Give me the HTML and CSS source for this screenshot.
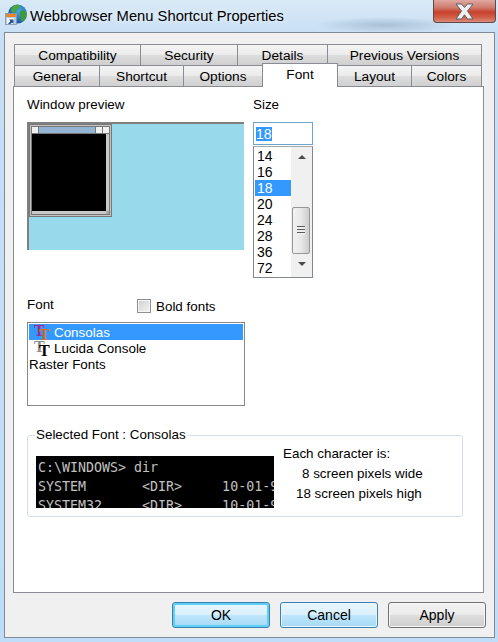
FILE: index.html
```html
<!DOCTYPE html>
<html lang="en">
<head>
    <meta charset="UTF-8">
    <title>Webbrowser Menu Shortcut Properties</title>
    <link rel="stylesheet" href="styles.css">
</head>
<body>
    <div class="frame">
        <div class="titlebar">
            <svg class="app-icon" width="22" height="21" viewBox="0 0 22 21">
                <defs>
                    <radialGradient id="globeFill" cx="0.6" cy="0.35" r="0.7">
                        <stop offset="0" stop-color="#4aa8e8"/>
                        <stop offset="1" stop-color="#134f9a"/>
                    </radialGradient>
                </defs>
                <circle cx="12.5" cy="10" r="9.5" fill="url(#globeFill)"/>
                <path d="M8 2c2-1.500 6-1.500 7-.5 .5 2-1.500 3-3 4-1.500 1-1 3-3 3.500-1.500 0-3-1-3-2.500 0-2 1-3.500 2-4.500z" fill="#4ba53f"/>
                <path d="M15 7c2-1 5-.5 6.500 1.500 .5 3-1 7-3.500 9-2 0-2.500-2-2.500-4 0-2-1.500-4.500-.5-6.500z" fill="#3c9a38"/>
                <rect x="0.500" y="9.500" width="11" height="11" fill="#b9c9dc" stroke="#8494a8" stroke-width="0.8"/>
                <rect x="1" y="10" width="10" height="3" fill="#e8842e"/>
                <rect x="2" y="14" width="7" height="6" fill="#f4f7fa"/>
                <path d="M3 20l2.500-3-1.500-1.500h4.500v4.500l-1.300-1.500-2 1.500z" fill="#1c4c9c"/>
            </svg>
            <span class="title">Webbrowser Menu Shortcut Properties</span>
            <div class="close">
                <svg width="19" height="17" viewBox="0 0 19 17">
                    <path d="M1 1h5.500l3 3.500 3-3.500h5.500l-5.500 7 5.500 8h-5.500l-3-4.200-3 4.200H1l5.500-8z" fill="#f0f0f0" stroke="#5a5f68" stroke-width="1"/>
                </svg>
            </div>
        </div>

        <div class="client">
            <div class="tab-row row-back">
                <div class="tab">Compatibility</div>
                <div class="tab">Security</div>
                <div class="tab">Details</div>
                <div class="tab">Previous Versions</div>
            </div>
            <div class="tab-row row-front">
                <div class="tab">General</div>
                <div class="tab">Shortcut</div>
                <div class="tab">Options</div>
                <div class="tab tab-active">Font</div>
                <div class="tab">Layout</div>
                <div class="tab">Colors</div>
            </div>

            <div class="page">
                <div class="top-row">
                    <div class="preview-col">
                        <div class="label">Window preview</div>
                        <div class="preview">
                            <div class="mini-window">
                                <div class="mini-title">
                                    <span class="mini-btn"></span>
                                    <span class="mini-caption"></span>
                                    <span class="mini-btn"></span>
                                    <span class="mini-btn"></span>
                                </div>
                                <div class="mini-body">
                                    <div class="mini-screen"></div>
                                    <div class="mini-vscroll"></div>
                                    <div class="mini-hscroll"></div>
                                    <div class="mini-corner"></div>
                                </div>
                            </div>
                        </div>
                    </div>
                    <div class="size-col">
                        <div class="label">Size</div>
                        <div class="size-input"><span class="selected-text">18</span></div>
                        <div class="size-list">
                            <div class="size-items">
                                <div class="size-item">14</div>
                                <div class="size-item">16</div>
                                <div class="size-item size-item-on">18</div>
                                <div class="size-item">20</div>
                                <div class="size-item">24</div>
                                <div class="size-item">28</div>
                                <div class="size-item">36</div>
                                <div class="size-item">72</div>
                            </div>
                            <div class="scrollbar">
                                <div class="arrow arrow-up"></div>
                                <div class="thumb"><span class="grip"></span></div>
                                <div class="arrow arrow-down"></div>
                            </div>
                        </div>
                    </div>
                </div>

                <div class="font-head">
                    <div class="label font-label">Font</div>
                    <div class="bold-check">
                        <span class="checkbox"></span>
                        <span>Bold fonts</span>
                    </div>
                </div>

                <div class="font-list">
                    <div class="font-item font-item-on">
                        <span class="tt"><span class="tt-back tt-magenta">T</span><span class="tt-front tt-orange">T</span></span>
                        <span>Consolas</span>
                    </div>
                    <div class="font-item">
                        <span class="tt"><span class="tt-back tt-gray">T</span><span class="tt-front tt-black">T</span></span>
                        <span>Lucida Console</span>
                    </div>
                    <div class="font-item font-plain">Raster Fonts</div>
                </div>

                <fieldset class="selected-font">
                    <legend>Selected Font : Consolas</legend>
                    <div class="selected-row">
                        <div class="console">
                            <div class="console-line">C:\WINDOWS&gt; dir</div>
                            <div class="console-line">SYSTEM       &lt;DIR&gt;     10-01-99</div>
                            <div class="console-line">SYSTEM32     &lt;DIR&gt;     10-01-99</div>
                        </div>
                        <div class="char-info">
                            <div>Each character is:</div>
                            <div class="wide-line">8 screen pixels wide</div>
                            <div class="high-line">18 screen pixels high</div>
                        </div>
                    </div>
                </fieldset>
            </div>

            <div class="buttons">
                <div class="btn btn-default">OK</div>
                <div class="btn btn-hot">Cancel</div>
                <div class="btn">Apply</div>
            </div>
        </div>
    </div>
</body>
</html>
```

FILE: styles.css
```css
html, body {
    margin: 0;
    padding: 0;
}
body {
    width: 498px;
    height: 642px;
    overflow: hidden;
    font-family: "Liberation Sans", Arial, sans-serif;
    font-size: 13.4px;
    color: #000;
}
.frame {
    width: 498px;
    height: 642px;
    box-sizing: border-box;
    padding: 0 2px 4px 4px;
    background:
        radial-gradient(ellipse 70px 8px at 385px 25px, rgba(120, 140, 165, 0.4), transparent),
        linear-gradient(180deg, #d9e9f6 0, #c8dff5 34px, #bfdcf8 100%);
}

/* title bar */
.titlebar {
    display: flex;
    align-items: flex-start;
    height: 32px;
}
.app-icon {
    margin: 4px 0 0 1px;
}
.title {
    margin: 6px 0 0 3px;
    font-size: 14.75px;
    line-height: 20px;
    text-shadow: 0 0 6px #fff;
}
.close {
    display: flex;
    align-items: center;
    justify-content: center;
    width: 63px;
    height: 23px;
    margin-left: auto;
    box-sizing: border-box;
    border: 1px solid #5e4a48;
    border-top: 0;
    border-radius: 0 0 4px 4px;
    background: linear-gradient(180deg, #dfa8a0 0, #cf7a6c 35%, #c8412c 55%, #d2604a 80%, #d98c7a 100%);
}

/* dialog body */
.client {
    width: 491px;
    height: 606px;
    box-sizing: border-box;
    border: 1px solid #7f8a97;
    padding: 11px 0 0 8px;
    background: #f0f0f0;
}
.tab-row {
    display: grid;
    height: 21px;
    padding-left: 2px;
    font-size: 13.7px;
}
.row-back {
    grid-template-columns: 126px 97px 90px 154px;
}
.row-front {
    grid-template-columns: 85px 84px 79px 75px 74px 70px;
}
.tab {
    display: flex;
    align-items: center;
    justify-content: center;
    box-sizing: border-box;
    border: 1px solid #898c95;
    border-bottom: 0;
    margin-left: -1px;
    background: linear-gradient(180deg, #f4f4f4 0, #ebebeb 48%, #dddddd 50%, #cfcfcf 100%);
}
.tab-active {
    position: relative;
    height: 24px;
    margin-top: -2px;
    padding-bottom: 2px;
    background: #fff;
    z-index: 2;
}
.page {
    position: relative;
    width: 471px;
    height: 507px;
    box-sizing: border-box;
    border: 1px solid #898c95;
    padding: 9px 0 0 13px;
    background: #fff;
}
.label {
    height: 16px;
    line-height: 18px;
}
.top-row {
    display: flex;
    column-gap: 9px;
}

/* window preview */
.preview-col {
    width: 217px;
}
.preview {
    height: 128px;
    margin-top: 10px;
    box-sizing: border-box;
    border-top: 2px solid #808080;
    border-left: 2px solid #808080;
    background: #98d9eb;
}
.mini-window {
    width: 83px;
    height: 93px;
    box-sizing: border-box;
    border: 3px double #777;
    background: #c4c4c4;
}
.mini-title {
    display: flex;
    height: 6px;
    padding-bottom: 1px;
    column-gap: 1px;
    background: #777;
}
.mini-btn {
    width: 6px;
    height: 6px;
    background: #f0f0f0;
}
.mini-caption {
    flex: 1;
    background: #94b4d4;
}
.mini-body {
    display: grid;
    grid-template-columns: 74px 3px;
    grid-template-rows: 77px 3px;
}
.mini-screen {
    background: #000;
}
.mini-vscroll,
.mini-hscroll {
    background: #c8c8c8;
}
.mini-corner {
    background: #a8a8a8;
}

/* size */
.size-col {
    width: 60px;
}
.size-input {
    height: 23px;
    margin-top: 10px;
    box-sizing: border-box;
    border: 1px solid #6ea4cc;
    padding: 4px 0 0 2px;
    line-height: 14px;
    font-size: 14px;
    background: #fff;
}
.selected-text {
    display: inline-block;
    background: #3399ff;
    color: #fff;
}
.size-list {
    display: flex;
    height: 132px;
    margin-top: 1px;
    box-sizing: border-box;
    border: 1px solid #828790;
    border-top-color: #a8a8a8;
    font-size: 14px;
}
.size-items {
    flex: 1;
    padding: 1px 0 0 1px;
}
.size-item {
    height: 16px;
    line-height: 16px;
    padding-left: 2px;
}
.size-item-on {
    background: #3399ff;
    color: #fff;
}
.scrollbar {
    display: flex;
    flex-direction: column;
    align-items: center;
    width: 21px;
    background: #f0f0f0;
}
.arrow {
    width: 0;
    height: 0;
    border-left: 4px solid transparent;
    border-right: 4px solid transparent;
}
.arrow-up {
    margin-top: 8px;
    border-bottom: 4px solid #4a4a4a;
}
.arrow-down {
    margin-top: 8px;
    border-top: 4px solid #4a4a4a;
}
.thumb {
    display: flex;
    align-items: center;
    justify-content: center;
    width: 18px;
    height: 47px;
    margin: 48px 2px 0 0;
    box-sizing: border-box;
    border: 1px solid #979797;
    border-radius: 2px;
    background: linear-gradient(90deg, #f2f2f2 0, #e8e8e8 50%, #cdcdcd 100%);
}
.grip {
    width: 8px;
    height: 9px;
    background: repeating-linear-gradient(180deg, #5c5c5c 0, #5c5c5c 1px, #eeeeee 1px, #eeeeee 3px);
}

/* font chooser */
.font-head {
    display: flex;
    margin-top: 18px;
    height: 26px;
}
.font-label {
    width: 110px;
}
.bold-check {
    display: flex;
    align-items: center;
    column-gap: 5px;
    height: 16px;
    margin-top: 2px;
}
.checkbox {
    width: 14px;
    height: 14px;
    box-sizing: border-box;
    border: 1px solid #8e8f8f;
    background: linear-gradient(135deg, #d0d0d0 0, #f4f4f4 100%);
    box-shadow: inset 0 0 0 1px #f4f4f4;
}
.font-list {
    width: 218px;
    height: 84px;
    box-sizing: border-box;
    border: 1px solid #888;
    padding: 1px;
    background: #fff;
}
.font-item {
    display: flex;
    height: 16px;
    line-height: 18px;
}
.font-item-on {
    background: #3399ff;
    color: #fff;
}
.tt {
    position: relative;
    width: 25px;
    height: 16px;
}
.tt-back,
.tt-front {
    position: absolute;
    font-family: "Liberation Serif", serif;
    font-weight: bold;
    font-size: 16px;
    line-height: 14px;
}
.tt-back {
    left: 5px;
    top: 0;
}
.tt-front {
    left: 10px;
    top: 4px;
}
.tt-magenta {
    color: #b0228c;
}
.tt-orange {
    color: #d8700c;
}
.tt-gray {
    color: #8c8c8c;
}
.tt-black {
    color: #000;
}

/* selected font group */
.selected-font {
    width: 436px;
    margin: 21px 0 0;
    box-sizing: border-box;
    border: 1px solid #d5dfe5;
    border-radius: 3px;
    padding: 1px 8px 8px;
    min-width: 0;
}
.selected-font legend {
    margin-left: -1px;
    padding: 0 1px;
    line-height: 16px;
}
.selected-row {
    display: flex;
}
.console {
    flex: none;
    width: 238px;
    height: 52px;
    margin-top: 12px;
    padding-top: 2px;
    box-sizing: border-box;
    overflow: hidden;
    background: #000;
    color: #c0c0c0;
    font-family: "DejaVu Sans Mono", monospace;
    font-size: 13.3px;
}
.console-line {
    height: 19px;
    line-height: 19px;
    padding-left: 2px;
    white-space: pre;
}
.char-info {
    margin-left: 9px;
    line-height: 20px;
}
.wide-line {
    padding-left: 19px;
}
.high-line {
    padding-left: 13px;
}

/* bottom buttons */
.buttons {
    display: flex;
    justify-content: flex-end;
    column-gap: 10px;
    margin: 9px 8px 0 0;
    font-size: 14px;
}
.btn {
    display: flex;
    align-items: center;
    justify-content: center;
    width: 98px;
    height: 26px;
    box-sizing: border-box;
    border: 1px solid #707070;
    border-radius: 3px;
    box-shadow: inset 0 0 0 1px #f8f8f8;
    background: linear-gradient(180deg, #f2f2f2 0, #ebebeb 48%, #dddddd 50%, #cfcfcf 100%);
}
.btn-default {
    border-color: #3c7fb1;
    box-shadow: inset 0 0 0 2px #5fd0f5;
    background: linear-gradient(180deg, #eaf6fd 0, #d9f0fc 48%, #bee6fd 50%, #a7d9f5 100%);
}
.btn-hot {
    border-color: #3c7fb1;
    box-shadow: inset 0 0 0 1px #e8f6fd;
    background: linear-gradient(180deg, #eaf6fd 0, #d9f0fc 48%, #bee6fd 50%, #a7d9f5 100%);
}
```
